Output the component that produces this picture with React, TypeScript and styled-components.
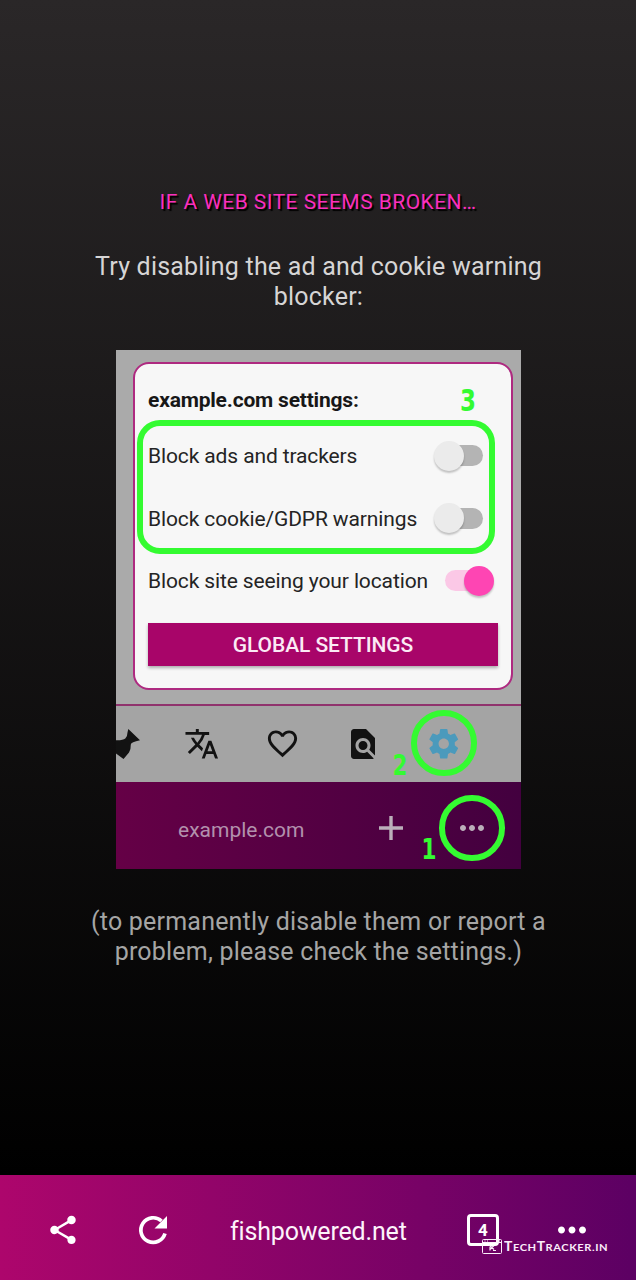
import React from "react";
import styled, { createGlobalStyle, css } from "styled-components";

const GlobalStyle = createGlobalStyle`
  * { box-sizing: border-box; }
  body { margin: 0; background: #000; font-family: Roboto, "Liberation Sans", sans-serif; }
`;

const Screen = styled.div`
  width: 636px;
  height: 1280px;
  display: flex;
  flex-direction: column;
  overflow: hidden;
`;

const Page = styled.main`
  height: 1175px;
  flex: none;
  display: flex;
  flex-direction: column;
  align-items: center;
  padding-top: 187px;
  background: linear-gradient(180deg, #2a2728 0%, #000 100%);
`;

const Title = styled.h1`
  margin: 0;
  height: 30px;
  font-size: 21px;
  line-height: 30px;
  font-weight: 400;
  letter-spacing: 0.45px;
  white-space: nowrap;
  color: #fb2fbd;
  text-shadow: 2px 2px 1px #000;
`;

const Paragraph = styled.p<{ $color: string; $top: number }>`
  margin: ${(p) => p.$top}px 0 0 1px;
  font-size: 25px;
  line-height: 30px;
  letter-spacing: 0.2px;
  text-align: center;
  white-space: nowrap;
  color: ${(p) => p.$color};
`;

const Figure = styled.section`
  position: relative;
  width: 405px;
  height: 519px;
  margin: 38px 0 0 1px;
  flex: none;
  display: flex;
  flex-direction: column;
  overflow: hidden;
  background: #aaa;
`;

const CardArea = styled.div`
  height: 354px;
  padding: 12px 8px 0 17px;
`;

const Card = styled.div`
  height: 328px;
  padding: 21px 13px 0 13px;
  border: 2px solid #ae2a80;
  border-radius: 16px;
  background: #f7f7f7;
`;

const CardTitle = styled.h2`
  margin: 0;
  height: 30px;
  font-size: 21px;
  line-height: 30px;
  font-weight: 700;
  letter-spacing: -0.2px;
  color: #171717;
`;

const SettingRow = styled.div<{ $first?: boolean }>`
  display: flex;
  align-items: center;
  justify-content: space-between;
  height: 62.5px;
  margin-top: ${(p) => (p.$first ? 10 : 0)}px;
  padding-right: 15.5px;
`;

const Label = styled.span`
  font-size: 21px;
  line-height: 30px;
  white-space: nowrap;
  color: #242424;
  letter-spacing: -0.12px;
`;

const Toggle = styled.span<{ $on?: boolean }>`
  display: flex;
  align-items: center;
  justify-content: ${(p) => (p.$on ? "flex-end" : "flex-start")};
  width: 37.5px;
  height: 21px;
  margin-bottom: 1px;
  border-radius: 11px;
  background: ${(p) => (p.$on ? "#fbc8e6" : "#b4b4b4")};
`;

const Knob = styled.span<{ $on?: boolean }>`
  flex: none;
  width: 30px;
  height: 30px;
  margin: 0 ${(p) => (p.$on ? "-11px" : "0")} 0 ${(p) => (p.$on ? "0" : "-11px")};
  border-radius: 50%;
  background: ${(p) => (p.$on ? "#fe45b3" : "#ebebeb")};
  box-shadow: 0 2px 2px rgba(0, 0, 0, 0.22);
`;

const GlobalButton = styled.button`
  display: block;
  width: 350px;
  height: 43px;
  margin: 10px 0 0;
  padding: 1px 0 0;
  border: 0;
  background: #a80569;
  box-shadow: 0 2px 3px rgba(0, 0, 0, 0.3);
  color: #fbeaf5;
  font: 500 21px/42px Roboto, "Liberation Sans", sans-serif;
  letter-spacing: -0.08px;
`;

const Tools = styled.div`
  display: flex;
  align-items: center;
  height: 78px;
  padding-bottom: 1px;
  border-top: 2px solid #90336d;
  background: #a4a4a4;
  color: #121212;
`;

const ToolSlot = styled.div<{ $width: number }>`
  display: flex;
  flex: none;
  justify-content: center;
  width: ${(p) => p.$width}px;
`;

const PreviewBar = styled.div`
  display: flex;
  align-items: center;
  height: 87px;
  padding: 5px 0 0 62px;
  background: linear-gradient(90deg, #650046 0%, #43003f 100%);
  color: #bbafba;
`;

const PreviewHost = styled.span`
  flex: none;
  width: 197px;
  padding-top: 3px;
  font-size: 21px;
  line-height: 30px;
  letter-spacing: 0;
  color: #b291ad;
`;

const marker = css`
  position: absolute;
  border: 6px solid #34fb31;
`;

const Outline = styled.div`
  ${marker}
  left: 21px;
  top: 70px;
  width: 358px;
  height: 134px;
  border-radius: 23px;
`;

const Ring = styled.div<{ $x: number; $y: number }>`
  ${marker}
  left: ${(p) => p.$x}px;
  top: ${(p) => p.$y}px;
  width: 65.5px;
  height: 65.5px;
  border-radius: 50%;
`;

const Step = styled.span<{ $x: number; $y: number; $size?: number }>`
  position: absolute;
  left: ${(p) => p.$x}px;
  top: ${(p) => p.$y}px;
  width: 24px;
  text-align: center;
  font: 700 ${(p) => p.$size ?? 29}px/34px "DejaVu Sans", sans-serif;
  transform: scaleX(0.74);
  color: #34fb31;
`;

const BottomBar = styled.nav`
  position: relative;
  display: flex;
  align-items: center;
  height: 105px;
  flex: none;
  padding: 4px 0 0 46px;
  background: linear-gradient(90deg, #ad066c 0%, #5c0063 100%);
  color: #fff;
`;

const BarSlot = styled.div<{ $width: number }>`
  display: flex;
  flex: none;
  width: ${(p) => p.$width}px;
`;

const Host = styled.span`
  flex: none;
  width: 237px;
  padding-top: 4px;
  font-size: 25px;
  line-height: 30px;
  letter-spacing: -0.17px;
  color: #fdf3fb;
`;

const TabCount = styled.span`
  display: flex;
  align-items: center;
  justify-content: center;
  width: 32px;
  height: 32px;
  border: 3px solid #fff;
  border-radius: 4px;
  font-size: 17px;
  font-weight: 700;
`;

const Watermark = styled.div`
  position: absolute;
  left: 482px;
  top: 62px;
  display: flex;
  align-items: center;
  gap: 2px;
  color: #fbeefa;
`;

const Brand = styled.span`
  padding-top: 1px;
  font: 700 10px/18px Lato, sans-serif;
  letter-spacing: 0.5px;
  white-space: nowrap;
  transform: scaleX(1.11);
  transform-origin: left;
`;

const BrandCap = styled.span`
  font-size: 12.5px;
`;

const Icon = ({ size, d, color = "currentColor" }: { size: number; d: string; color?: string }) => (
  <svg width={size} height={size} viewBox="0 0 24 24" fill={color}>
    <path d={d} />
  </svg>
);

const paths = {
  translate:
    "M12.87 15.07l-2.54-2.51.03-.03A17.52 17.52 0 0 0 14.07 6H17V4h-7V2H8v2H1v1.99h11.17C11.5 7.92 10.44 9.75 9 11.35 8.07 10.32 7.3 9.19 6.69 8h-2c.73 1.63 1.73 3.17 2.98 4.56l-5.09 5.02L4 19l5-5 3.11 3.11.76-2.04zM18.5 10h-2L12 22h2l1.12-3h4.75L21 22h2l-4.5-12zm-2.62 7l1.62-4.33L19.12 17h-3.24z",
  heart:
    "M16.5 3c-1.74 0-3.41.81-4.5 2.09C10.91 3.81 9.24 3 7.5 3 4.42 3 2 5.42 2 8.5c0 3.78 3.4 6.86 8.55 11.54L12 21.35l1.45-1.32C18.6 15.36 22 12.28 22 8.5 22 5.42 19.58 3 16.5 3zm-4.4 15.55l-.1.1-.1-.1C7.14 14.24 4 11.39 4 8.5 4 6.5 5.5 5 7.5 5c1.54 0 3.04.99 3.57 2.36h1.87C13.46 5.99 14.96 5 16.5 5c2 0 3.5 1.5 3.5 3.5 0 2.89-3.14 5.74-7.9 10.05z",
  find:
    "M20 19.59V8l-6-6H6c-1.1 0-1.99.9-1.99 2L4 20c0 1.1.89 2 1.99 2H18c.45 0 .85-.15 1.19-.4l-4.43-4.43c-.8.52-1.74.83-2.76.83-2.76 0-5-2.24-5-5s2.24-5 5-5 5 2.24 5 5c0 1.02-.31 1.96-.83 2.75L20 19.59zM9 13c0 1.66 1.34 3 3 3s3-1.34 3-3-1.34-3-3-3-3 1.34-3 3z",
  gear:
    "M19.43 12.98c.04-.32.07-.64.07-.98s-.03-.66-.07-.98l2.11-1.65c.19-.15.24-.42.12-.64l-2-3.46c-.12-.22-.39-.3-.61-.22l-2.49 1c-.52-.4-1.08-.73-1.69-.98l-.38-2.65C14.46 2.18 14.25 2 14 2h-4c-.25 0-.46.18-.49.42l-.38 2.65c-.61.25-1.17.59-1.69.98l-2.49-1c-.23-.09-.49 0-.61.22l-2 3.46c-.13.22-.07.49.12.64l2.11 1.65c-.04.32-.07.65-.07.98s.03.66.07.98l-2.11 1.65c-.19.15-.24.42-.12.64l2 3.46c.12.22.39.3.61.22l2.49-1c.52.4 1.08.73 1.69.98l.38 2.65c.03.24.24.42.49.42h4c.25 0 .46-.18.49-.42l.38-2.65c.61-.25 1.17-.59 1.69-.98l2.49 1c.23.09.49 0 .61-.22l2-3.46c.12-.22.07-.49-.12-.64l-2.11-1.65zM12 15.5c-1.93 0-3.5-1.57-3.5-3.5s1.57-3.5 3.5-3.5 3.5 1.57 3.5 3.5-1.57 3.5-3.5 3.5z",
  more:
    "M6 10c-1.1 0-2 .9-2 2s.9 2 2 2 2-.9 2-2-.9-2-2-2zm12 0c-1.1 0-2 .9-2 2s.9 2 2 2 2-.9 2-2-.9-2-2-2zm-6 0c-1.1 0-2 .9-2 2s.9 2 2 2 2-.9 2-2-.9-2-2-2z",
  share:
    "M18 16.08c-.76 0-1.44.3-1.96.77L8.91 12.7c.05-.23.09-.46.09-.7s-.04-.47-.09-.7l7.05-4.11c.54.5 1.25.81 2.04.81 1.66 0 3-1.34 3-3s-1.34-3-3-3-3 1.34-3 3c0 .24.04.47.09.7L8.04 9.81C7.5 9.31 6.79 9 6 9c-1.66 0-3 1.34-3 3s1.34 3 3 3c.79 0 1.5-.31 2.04-.81l7.12 4.16c-.05.21-.08.43-.08.65 0 1.61 1.31 2.92 2.92 2.92s2.92-1.31 2.92-2.92-1.31-2.92-2.92-2.92z",
};

const PinIcon = () => (
  <svg width="26" height="32" viewBox="0 0 26 32" fill="currentColor">
    <path d="M12.3 1 24 12.2Q15 14 14.8 16.5 15 21 13 24.5L7.5 31 0 25.5V12.3Q7 12.5 9.3 10.5 11.5 8.5 11.4 5Z" />
  </svg>
);

const RefreshIcon = () => (
  <svg width="32" height="32" viewBox="0 0 32 32">
    <path
      d="M28 19.5A12.3 12.3 0 1 1 24.5 7"
      fill="none"
      stroke="currentColor"
      strokeWidth="3.7"
    />
    <path d="M30 2v12.5H17.5Z" fill="currentColor" />
  </svg>
);

const BrandIcon = () => (
  <svg width="20" height="15" viewBox="0 0 20 15" fill="none" stroke="currentColor">
    <rect x=".5" y=".5" width="19" height="14" rx="1" />
    <path d="M1 3.5h18M2.5 2h1M5 2h1M14 2h4" />
    <path d="m7 6 5 4.5M8 10.5l4-4M8 8v3.5M11 11.5h3" strokeWidth="1.2" />
  </svg>
);

export default function App() {
  return (
    <Screen>
      <GlobalStyle />
      <Page>
        <Title>IF A WEB SITE SEEMS BROKEN…</Title>
        <Paragraph $color="#d6d5d5" $top={35}>
          Try disabling the ad and cookie warning
          <br />
          blocker:
        </Paragraph>
        <Figure>
          <CardArea>
            <Card>
              <CardTitle>example.com settings:</CardTitle>
              <SettingRow $first>
                <Label>Block ads and trackers</Label>
                <Toggle><Knob /></Toggle>
              </SettingRow>
              <SettingRow>
                <Label>Block cookie/GDPR warnings</Label>
                <Toggle><Knob /></Toggle>
              </SettingRow>
              <SettingRow>
                <Label>Block site seeing your location</Label>
                <Toggle $on><Knob $on /></Toggle>
              </SettingRow>
              <GlobalButton>GLOBAL SETTINGS</GlobalButton>
            </Card>
          </CardArea>
          <Tools>
            <ToolSlot $width={26}><PinIcon /></ToolSlot>
            <ToolSlot $width={120}><Icon size={35.5} d={paths.translate} /></ToolSlot>
            <ToolSlot $width={41}><Icon size={35} d={paths.heart} /></ToolSlot>
            <ToolSlot $width={120}><Icon size={36} d={paths.find} /></ToolSlot>
            <ToolSlot $width={41}><Icon size={35.5} d={paths.gear} color="#4b9abc" /></ToolSlot>
          </Tools>
          <PreviewBar>
            <PreviewHost>example.com</PreviewHost>
            <ToolSlot $width={32}>
              <svg width="24" height="24" viewBox="0 0 24 24" stroke="currentColor" strokeWidth="3.4">
                <path d="M12 0v24M0 12h24" />
              </svg>
            </ToolSlot>
            <ToolSlot $width={130}><Icon size={36} d={paths.more} /></ToolSlot>
          </PreviewBar>
          <Outline />
          <Ring $x={295} $y={360} />
          <Ring $x={323} $y={445} />
          <Step $x={340} $y={33} $size={31}>3</Step>
          <Step $x={272} $y={398}>2</Step>
          <Step $x={301} $y={482}>1</Step>
        </Figure>
        <Paragraph $color="#a5a5a5" $top={38}>
          (to permanently disable them or report a
          <br />
          problem, please check the settings.)
        </Paragraph>
      </Page>
      <BottomBar>
        <BarSlot $width={91}><Icon size={34} d={paths.share} /></BarSlot>
        <BarSlot $width={93}><RefreshIcon /></BarSlot>
        <Host>fishpowered.net</Host>
        <BarSlot $width={84}><TabCount>4</TabCount></BarSlot>
        <BarSlot $width={42}><Icon size={42} d={paths.more} /></BarSlot>
        <Watermark>
          <BrandIcon />
          <Brand><BrandCap>T</BrandCap>ECH<BrandCap>T</BrandCap>RACKER.IN</Brand>
        </Watermark>
      </BottomBar>
    </Screen>
  );
}
